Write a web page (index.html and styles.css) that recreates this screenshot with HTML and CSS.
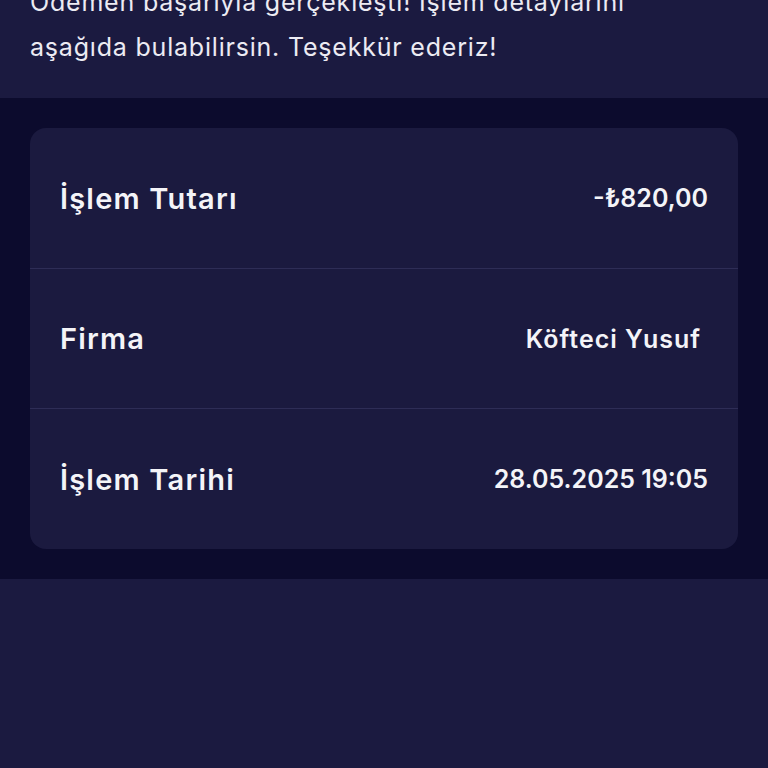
FILE: index.html
```html
<!DOCTYPE html>
<html lang="tr">
<head>
    <meta charset="UTF-8">
    <meta name="viewport" content="width=device-width, initial-scale=1.0">
    <title>Ödeme detayı</title>
    <link rel="stylesheet" href="styles.css">
</head>
<body>
    <div class="header">
        <p class="message">Ödemen başarıyla gerçekleşti! İşlem detaylarını aşağıda bulabilirsin. Teşekkür ederiz!</p>
    </div>
    <div class="details">
        <div class="card">
            <div class="row">
                <span class="label">İşlem Tutarı</span>
                <span class="value">-₺820,00</span>
            </div>
            <div class="row">
                <span class="label">Firma</span>
                <span class="value firm">Köfteci Yusuf</span>
            </div>
            <div class="row">
                <span class="label">İşlem Tarihi</span>
                <span class="value">28.05.2025 19:05</span>
            </div>
        </div>
    </div>
</body>
</html>
```
FILE: styles.css
```css
*{margin:0;padding:0;box-sizing:border-box;}
body{background:#1b1a40;font-family:"Inter","Noto Sans",sans-serif;color:#f4f4f8;height:100vh;overflow:hidden;}
.header{background:#1b1a40;padding:0 30px 28px;margin-top:-20px;}
.message{font-size:25px;line-height:45px;font-weight:400;letter-spacing:0.8px;color:#ecebf3;width:650px;}
.details{background:#0c0b2d;padding:30px;}
.card{background:#1b1a3f;border-radius:16px;overflow:hidden;}
.row{display:flex;justify-content:space-between;align-items:center;height:140px;padding:0 30px;border-top:1px solid #2e2d56;}
.row:first-child{border-top:none;}
.row:last-child{height:141px;}
.label{font-size:29px;font-weight:600;letter-spacing:1.2px;}
.value{font-size:25px;font-weight:600;}
.firm{padding-right:7px;letter-spacing:1px;}
```
